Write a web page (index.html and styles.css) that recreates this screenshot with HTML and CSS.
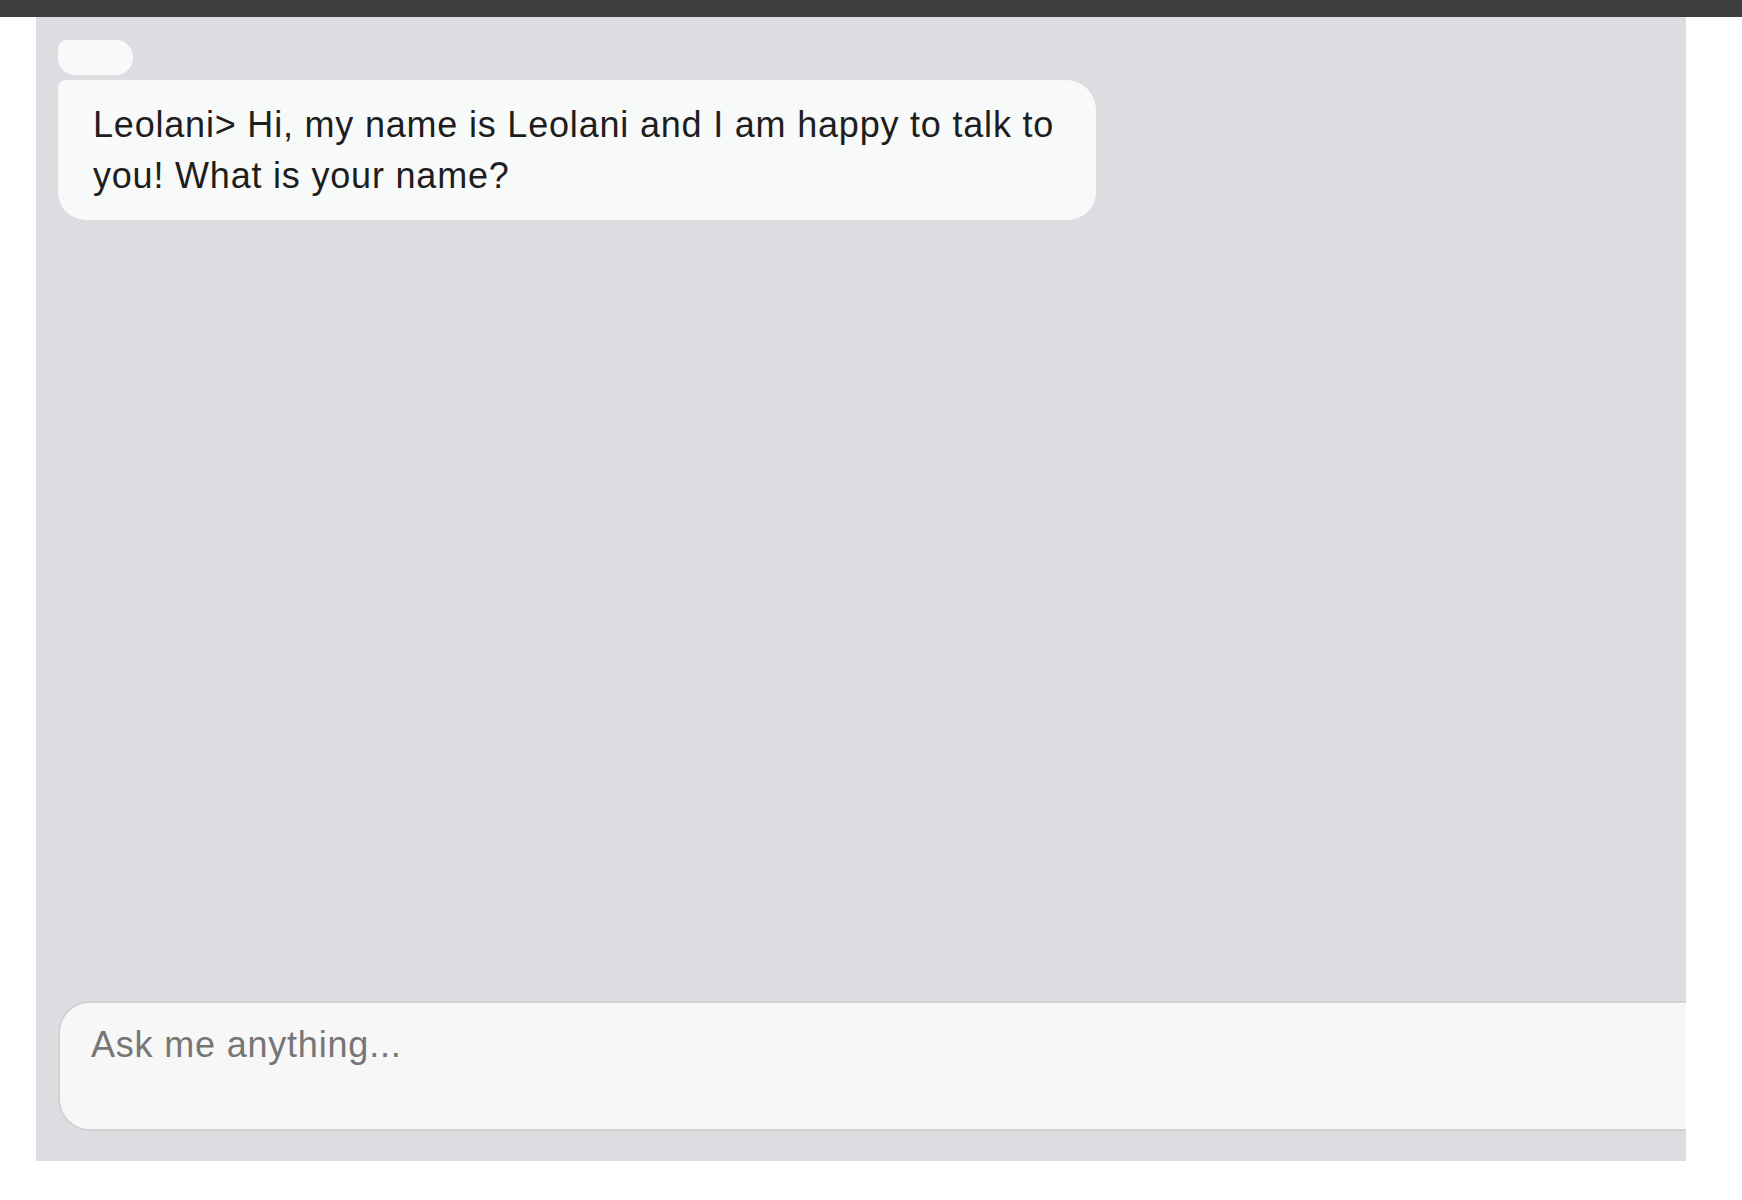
FILE: index.html
```html
<!DOCTYPE html>
<html lang="en">
<head>
<meta charset="utf-8">
<title>Leolani</title>
<link rel="stylesheet" href="styles.css">
</head>
<body>
<div class="topbar"></div>
<main class="panel">
  <section class="messages">
    <div class="author-pill"></div>
    <div class="bubble">Leolani&gt; Hi, my name is Leolani and I am happy to talk to you! What is your name?</div>
  </section>
  <div class="composer">
    <textarea class="input" placeholder="Ask me anything..."></textarea>
  </div>
</main>
</body>
</html>
```

FILE: styles.css
```css
* { box-sizing: border-box; }
html, body { margin: 0; padding: 0; background: #ffffff; }
body {
  font-family: "Liberation Sans", Arial, Helvetica, sans-serif;
  color: #1e1e1e;
}
.topbar {
  height: 17px;
  background: #3d3d3d;
}
.panel {
  margin-left: 36px;
  width: 1650px;
  height: 1144px;
  background: #dcdde1;
  display: flex;
  flex-direction: column;
  overflow: hidden;
  padding: 23px 0 30px 22px;
}
.messages {
  flex: 1;
  display: flex;
  flex-direction: column;
  align-items: flex-start;
  gap: 5px;
}
.author-pill {
  width: 75px;
  height: 35px;
  background: #f8f9f9;
  border-radius: 9px 17px 17px 17px;
}
.bubble {
  width: 1038px;
  background: #f8f9f9;
  border-radius: 8px 30px 28px 28px;
  padding: 19px 26px 19px 35px;
  font-size: 36px;
  line-height: 51px;
  letter-spacing: 0.8px;
  color: #1e1e1e;
}
.composer {
  display: flex;
}
.input {
  display: block;
  width: 1700px;
  flex: none;
  height: 130px;
  background: #f7f7f7;
  border: 2px solid #d2d2d3;
  border-radius: 32px;
  padding: 16px 31px;
  font-family: "Liberation Sans", Arial, Helvetica, sans-serif;
  font-size: 36px;
  line-height: 51px;
  letter-spacing: 0.8px;
  color: #1e1e1e;
  resize: none;
  outline: none;
}
.input::placeholder {
  color: #767676;
  opacity: 1;
}
```
